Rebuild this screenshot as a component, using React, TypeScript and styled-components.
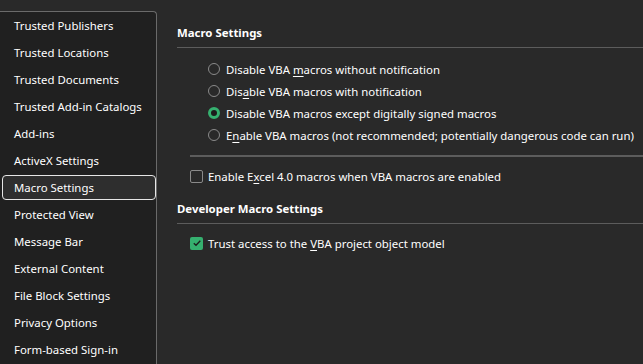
import styled, { createGlobalStyle } from "styled-components";

const GlobalStyle = createGlobalStyle`
  html, body {
    margin: 0;
    padding: 0;
    background: #292929;
  }
  body {
    font-family: "Noto Sans", "Open Sans", sans-serif;
    color: #ffffff;
    overflow: hidden;
  }
`;

const navItems = [
  "Trusted Publishers",
  "Trusted Locations",
  "Trusted Documents",
  "Trusted Add-in Catalogs",
  "Add-ins",
  "ActiveX Settings",
  "Macro Settings",
  "Protected View",
  "Message Bar",
  "External Content",
  "File Block Settings",
  "Privacy Options",
  "Form-based Sign-in",
];

interface RadioOption {
  before: string;
  key?: string;
  after?: string;
  checked?: boolean;
}

const radios: RadioOption[] = [
  { before: "Disable VBA ", key: "m", after: "acros without notification" },
  { before: "Dis", key: "a", after: "ble VBA macros with notification" },
  { before: "Disable VBA macros except digitally signed macros", checked: true },
  { before: "E", key: "n", after: "able VBA macros (not recommended; potentially dangerous code can run)" },
];

const App = () => {
  return (
    <>
      <GlobalStyle />
      <Window>
        <Sidebar>
          {navItems.map((item) => (
            <NavItem key={item} $active={item === "Macro Settings"}>
              {item}
            </NavItem>
          ))}
        </Sidebar>
        <Content>
          <Section>
            <Heading>Macro Settings</Heading>
            <RadioGroup>
              {radios.map((r) => (
                <OptionRow key={r.before}>
                  <Radio $checked={r.checked} />
                  <Label>
                    {r.before}
                    {r.key && <u>{r.key}</u>}
                    {r.after}
                  </Label>
                </OptionRow>
              ))}
            </RadioGroup>
            <Divider />
            <CheckRow>
              <Checkbox />
              <Label>
                Enable E<u>x</u>cel 4.0 macros when VBA macros are enabled
              </Label>
            </CheckRow>
          </Section>
          <Section>
            <Heading>Developer Macro Settings</Heading>
            <CheckRow>
              <Checkbox $checked>
                <svg width="10" height="10" viewBox="0 0 10 10">
                  <path d="M1.8 5.2 L4 7.3 L8.3 2.8" fill="none" stroke="#1c1c1c" strokeWidth="1.3" />
                </svg>
              </Checkbox>
              <Label>
                Trust access to the <u>V</u>BA project object model
              </Label>
            </CheckRow>
          </Section>
        </Content>
      </Window>
    </>
  );
};

export default App;

const Window = styled.div`
  display: flex;
  height: 364px;
  width: 643px;
  overflow: hidden;
`;

const Sidebar = styled.nav`
  width: 156px;
  flex-shrink: 0;
  margin-top: 11px;
  background: #202020;
  border-top: 1px solid #6a6a6a;
  border-right: 1px solid #6a6a6a;
  border-top-right-radius: 4px;
  display: flex;
  flex-direction: column;
`;

const NavItem = styled.div<{ $active?: boolean }>`
  height: ${(p) => (p.$active ? "23px" : "27px")};
  margin: ${(p) => (p.$active ? "1px 0 1px 2px" : "0")};
  padding-left: ${(p) => (p.$active ? "11px" : "14px")};
  display: flex;
  align-items: center;
  font-size: 11.4px;
  color: #ffffff;
  white-space: nowrap;
  background: ${(p) => (p.$active ? "#2e2e2e" : "transparent")};
  border: ${(p) => (p.$active ? "1px solid #e6e6e6" : "none")};
  border-radius: 4px;
`;

const Content = styled.main`
  flex: 1;
  padding: 24px 0 0 20px;
  display: flex;
  flex-direction: column;
  gap: 14px;
`;

const Section = styled.section`
  display: flex;
  flex-direction: column;
`;

const Heading = styled.h2`
  margin: 0;
  font-size: 11.4px;
  font-weight: 700;
  line-height: 17px;
  padding-bottom: 6px;
  border-bottom: 1px solid #5c5c5c;
`;

const RadioGroup = styled.div`
  display: flex;
  flex-direction: column;
  padding: 10px 0 9px 31px;
`;

const OptionRow = styled.label`
  display: flex;
  align-items: center;
  gap: 6px;
  height: 22px;
`;

const Radio = styled.span<{ $checked?: boolean }>`
  width: 12px;
  height: 12px;
  box-sizing: border-box;
  border-radius: 50%;
  flex-shrink: 0;
  border: ${(p) => (p.$checked ? "3.5px solid #35b06f" : "1px solid #8a8a8a")};
  background: ${(p) => (p.$checked ? "#1c1c1c" : "transparent")};
`;

const Label = styled.span`
  font-size: 11.4px;
  color: #ffffff;
  white-space: nowrap;
  u {
    text-underline-offset: 2px;
  }
`;

const Divider = styled.hr`
  margin: 0 0 0 13px;
  border: none;
  height: 2px;
  background: #5c5c5c;
`;

const CheckRow = styled.label`
  display: flex;
  align-items: center;
  gap: 5px;
  padding-left: 13px;
  height: 20px;
  margin-top: 9px;
`;

const Checkbox = styled.span<{ $checked?: boolean }>`
  width: 13px;
  height: 13px;
  box-sizing: border-box;
  border-radius: 2px;
  flex-shrink: 0;
  display: flex;
  align-items: center;
  justify-content: center;
  border: ${(p) => (p.$checked ? "none" : "1px solid #8a8a8a")};
  background: ${(p) => (p.$checked ? "#35b06f" : "transparent")};
`;
